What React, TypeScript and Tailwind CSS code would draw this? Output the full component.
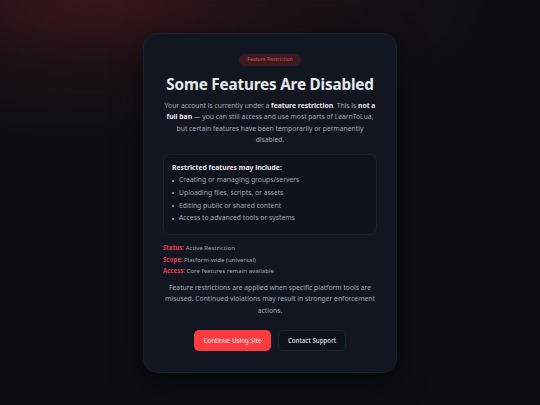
import React from "react";

const restricted = [
  "Creating or managing groups/servers",
  "Uploading files, scripts, or assets",
  "Editing public or shared content",
  "Access to advanced tools or systems",
];

const details = [
  { label: "Status:", value: "Active Restriction" },
  { label: "Scope:", value: "Platform-wide (universal)" },
  { label: "Access:", value: "Core features remain available" },
];

export default function App() {
  return (
    <div
      className="min-h-screen w-full bg-[#0c0e13] bg-[radial-gradient(ellipse_75%_35%_at_18%_0%,#3a1519_0%,#1d1114_45%,transparent_100%)] pt-[33px] pb-[34px]"
      style={{ fontFamily: '"Noto Sans", "Open Sans", sans-serif' }}
    >
      {/* Card */}
      <div className="mx-auto w-[254px] rounded-[14px] border border-[#1a202a] bg-[#111620] px-[19px] pt-[20px] pb-[21px] shadow-[0_10px_30px_rgba(0,0,0,0.5)]">
        <div className="flex justify-center">
          <span className="flex h-[12px] items-center rounded-full bg-[#3a1a21] px-[8px] text-[5px] font-medium text-[#d0404c]">
            Feature Restriction
          </span>
        </div>

        <h1 className="mt-[6px] whitespace-nowrap text-center text-[15.3px] font-bold leading-[24px] tracking-[-0.2px] text-[#e6e8ec]">
          Some Features Are Disabled
        </h1>

        <p className="mt-[4px] text-center text-[6.75px] leading-[11.3px] text-[#a3a9b5]">
          Your account is currently under a{" "}
          <strong className="font-bold text-[#e6e8ec]">feature restriction</strong>. This is{" "}
          <strong className="font-bold text-[#e6e8ec]">not a full ban</strong> — you can still access and use most
          parts of LearnToLua, but certain features have been temporarily or permanently disabled.
        </p>

        {/* Restricted list */}
        <div className="mt-[9px] rounded-[7px] border border-[#1d232e] bg-[#0f131b] px-[8px] pt-[7px] pb-[9px]">
          <div className="text-[6.8px] font-bold leading-[11px] text-[#e6e8ec]">Restricted features may include:</div>
          <ul className="mt-[1px]">
            {restricted.map((item) => (
              <li key={item} className="flex items-center gap-[5px] text-[6.8px] leading-[12.7px] text-[#a3a9b5]">
                <span className="h-[2px] w-[2px] shrink-0 rounded-full bg-[#a3a9b5]" />
                {item}
              </li>
            ))}
          </ul>
        </div>

        {/* Details */}
        <div className="mt-[7px]">
          {details.map((d) => (
            <div key={d.label} className="text-[6.1px] leading-[11.5px] text-[#a3a9b5]">
              <span className="font-bold text-[#e0404a]">{d.label}</span> {d.value}
            </div>
          ))}
        </div>

        <p className="mt-[5px] text-center text-[6.75px] leading-[11.5px] text-[#a3a9b5]">
          Feature restrictions are applied when specific platform tools are misused. Continued violations may result
          in stronger enforcement actions.
        </p>

        {/* Actions */}
        <div className="mt-[14px] flex justify-center gap-[7px]">
          <button className="h-[21px] w-[77px] rounded-[5px] bg-[#ff3b3f] text-[6.2px] font-medium text-[#fde2e3]">
            Continue Using Site
          </button>
          <button className="h-[21px] w-[68px] rounded-[5px] border border-[#1f2530] bg-[#0e121a] text-[6.2px] font-medium text-[#dfe2e7]">
            Contact Support
          </button>
        </div>
      </div>
    </div>
  );
}
